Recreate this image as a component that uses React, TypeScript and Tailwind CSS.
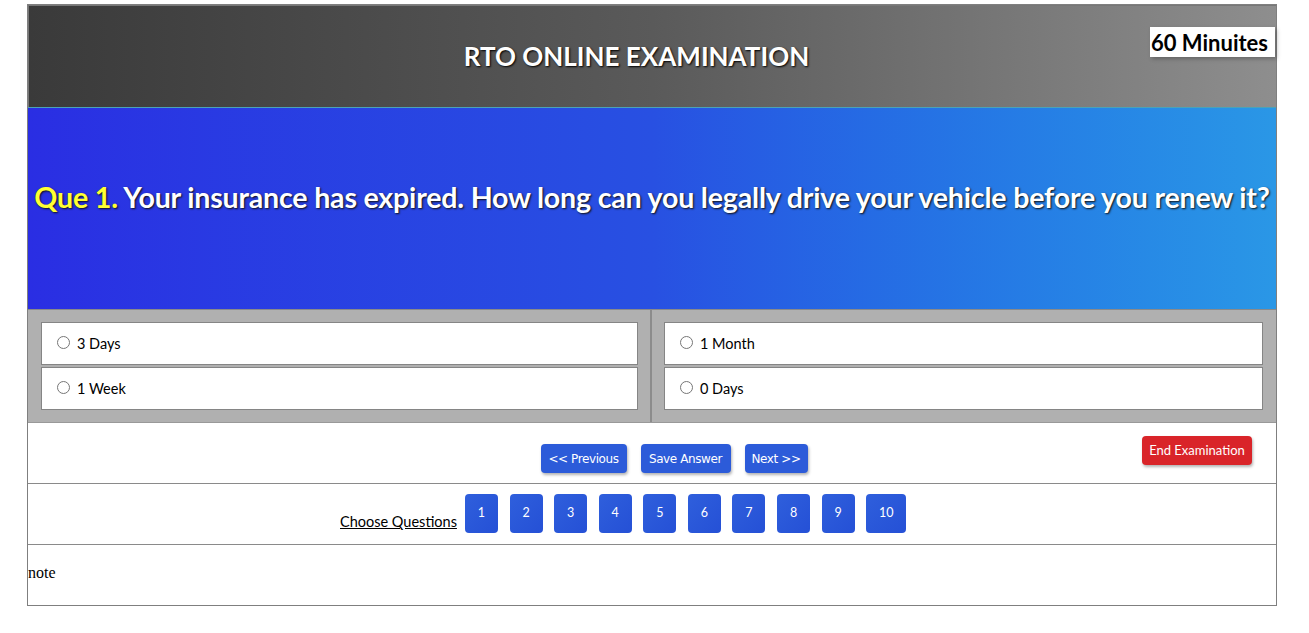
import { useState } from "react";

const options = [
  ["3 Days", "1 Month"],
  ["1 Week", "0 Days"],
];

const App = () => {
  const [picked, setPicked] = useState<string | null>(null);
  const nums = [1, 2, 3, 4, 5, 6, 7, 8, 9, 10];

  const OptionBox = ({ label }: { label: string }) => (
    <label className="flex items-center h-[43px] bg-white border border-[#858585] pl-[15px] gap-[7px] text-[14.5px] text-black font-['Lato',sans-serif] cursor-pointer">
      <input
        type="radio"
        name="ans"
        checked={picked === label}
        onChange={() => setPicked(label)}
        className="w-[13px] h-[13px] m-0 -translate-y-[1px]"
      />
      {label}
    </label>
  );

  return (
    <div className="w-[1309px] h-[633px] bg-white pt-[4px] pl-[27px]">
      <div className="w-[1250px] border border-[#7f7f7f] flex flex-col">
        {/* header */}
        <div className="relative h-[102px] border-t border-l border-[#777] bg-gradient-to-r from-[#3a3a3a] via-[#5a5a5a] to-[#8e8e8e] flex items-center justify-center pr-[32px]">
          <h1 className="text-white text-[26px] font-bold font-['Lato',sans-serif] [text-shadow:1px_1px_2px_#000]">
            RTO ONLINE EXAMINATION
          </h1>
          <div className="absolute right-[1px] top-[21px] bg-white pl-[1px] pr-[7px] h-[30px] flex items-center text-[22px] font-bold text-black font-['Lato',sans-serif] shadow-[2px_2px_4px_rgba(0,0,0,0.25)]">
            60 Minuites
          </div>
        </div>

        {/* question */}
        <div className="h-[202px] border-t border-[#4aa3b8] bg-gradient-to-r from-[#2a2ee3] via-[#2850e2] to-[#2a97e6] flex items-center justify-center pb-[22px]">
          <p className="text-[28.6px] font-bold font-['Lato',sans-serif] text-white [text-shadow:1px_1px_2px_#111] whitespace-nowrap tracking-[-0.2px]">
            <span className="text-[#ffff33]">Que 1.</span> Your insurance has expired. How long can you legally drive your vehicle before you renew it?
          </p>
        </div>

        {/* options */}
        <div className="grid grid-cols-2 bg-[#b0b0b0] border-t border-[#8a8a8a]">
          {[0, 1].map((c) => (
            <div
              key={c}
              className={`flex flex-col gap-[2px] pt-[12px] pb-[12px] ${c === 0 ? "border-r-2 border-[#8c8c8c] pl-[13px] pr-[12px]" : "pl-[12px] pr-[13px]"}`}
            >
              {options.map((row) => (
                <OptionBox key={row[c]} label={row[c]} />
              ))}
            </div>
          ))}
        </div>

        {/* nav */}
        <div className="relative h-[62px] border-t border-[#999] border-b border-b-[#8a8a8a] flex items-start justify-center pl-[44px] pt-[21px] gap-[14px] font-['DejaVu_Sans',sans-serif] text-[12px] text-white">
          <button className="h-[29px] w-[86px] rounded-[4px] bg-[#2c5bd9] shadow-[1px_2px_3px_rgba(0,0,0,0.3)] tracking-[-0.4px]">
            &lt;&lt; Previous
          </button>
          <button className="h-[29px] w-[90px] rounded-[4px] bg-[#2c5bd9] shadow-[1px_2px_3px_rgba(0,0,0,0.3)] tracking-[-0.4px]">
            Save Answer
          </button>
          <button className="h-[29px] w-[63px] rounded-[4px] bg-[#2c5bd9] shadow-[1px_2px_3px_rgba(0,0,0,0.3)] tracking-[-0.4px]">
            Next &gt;&gt;
          </button>
          <button className="absolute right-[24px] top-[13px] h-[29px] w-[110px] rounded-[4px] bg-[#d92429] shadow-[1px_2px_3px_rgba(0,0,0,0.3)] font-['Lato',sans-serif] text-[13px]">
            End Examination
          </button>
        </div>

        {/* choose questions */}
        <div className="h-[61px] border-b border-[#8a8a8a] flex items-start pl-[312px] pt-[10px]">
          <span className="mt-[17px] mr-[8px] text-[14.5px] underline font-['Lato',sans-serif] text-black">
            Choose Questions
          </span>
          <div className="flex gap-[11.6px]">
            {nums.map((n) => (
              <button
                key={n}
                className={`h-[39px] ${n === 10 ? "w-[40px]" : "w-[33px]"} rounded-[4px] bg-gradient-to-br from-[#2f5fdc] to-[#2550d6] text-white text-[12.5px] font-['Lato',sans-serif]`}
              >
                {n}
              </button>
            ))}
          </div>
        </div>

        {/* note */}
        <div className="h-[60px] flex items-center pb-[4px] font-['Liberation_Serif',serif] text-[16px] text-black">
          note
        </div>
      </div>
    </div>
  );
};

export default App;
